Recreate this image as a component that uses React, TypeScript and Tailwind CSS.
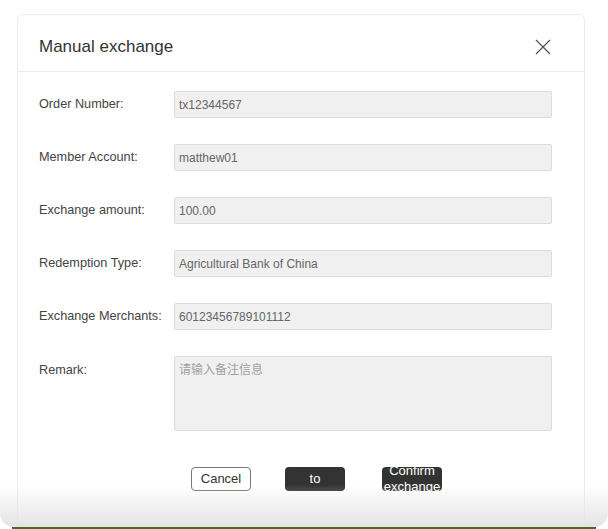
const rows = [
  { label: 'Order Number:', value: 'tx12344567' },
  { label: 'Member Account:', value: 'matthew01' },
  { label: 'Exchange amount:', value: '100.00' },
  { label: 'Redemption Type:', value: 'Agricultural Bank of China' },
  { label: 'Exchange Merchants:', value: '60123456789101112' },
];

function CloseIcon() {
  return (
    <svg width="16" height="16" viewBox="0 0 16 16" fill="none">
      <path d="M1 1L15 15M15 1L1 15" stroke="#555" strokeWidth="1.3" />
    </svg>
  );
}

export default function App() {
  return (
    <div className="w-[608px] h-[529px] bg-white flex flex-col" style={{ fontFamily: '"Liberation Sans", Arial, "Noto Sans CJK SC", sans-serif' }}>
      <div className="relative h-[527px] overflow-hidden rounded-b-[14px] bg-white">
        <div className="ml-[17px] mt-[14px] w-[568px] h-[560px] border border-[#ececec] rounded-[6px]">
          {/* header */}
          <div className="h-[57px] flex items-center justify-between pt-[7px] pl-[21px] pr-[33px] border-b border-[#ececec]">
            <h2 className="text-[17px] text-[#333]">Manual exchange</h2>
            <CloseIcon />
          </div>

          <div className="pt-[19px] pl-[21px] pr-[32px]">
            {rows.map((r) => (
              <div key={r.label} className="flex items-center mb-[26px]">
                <label className="w-[135px] text-[12.7px] text-[#444]">{r.label}</label>
                <div className="flex-1 h-[27px] flex items-center px-[4px] bg-[#f0f0f0] border border-[#dcdcdc] rounded-[2px] text-[12px] text-[#666]">
                  {r.value}
                </div>
              </div>
            ))}
            <div className="flex items-start">
              <label className="w-[135px] pt-[5px] text-[12.7px] text-[#444]">Remark:</label>
              <div className="flex-1 h-[75px] px-[4px] pt-[4px] bg-[#f0f0f0] border border-[#dcdcdc] rounded-[2px] text-[12px] text-[#a0a0a0]">
                请输入备注信息
              </div>
            </div>

            <div className="flex items-center mt-[36px] ml-[152px]">
              <button className="w-[60px] h-[24px] rounded-[4px] border border-[#777] bg-white text-[13px] text-[#333]">
                Cancel
              </button>
              <button className="ml-[34px] w-[60px] h-[24px] rounded-[4px] bg-[#333] text-[13px] text-white">
                to
              </button>
              <button className="ml-[37px] w-[60px] h-[24px] rounded-[4px] bg-[#333] text-[13px] leading-[16px] text-white overflow-hidden flex items-center justify-center">
                <span className="block">Confirm exchange</span>
              </button>
            </div>
          </div>
        </div>
        <div className="pointer-events-none absolute left-0 right-0 bottom-0 h-[42px] bg-gradient-to-b from-white/0 to-[#e4e4e4]" />
      </div>
      <div className="mx-[12px] h-[2px] bg-[#4d6b1f]" />
    </div>
  );
}
